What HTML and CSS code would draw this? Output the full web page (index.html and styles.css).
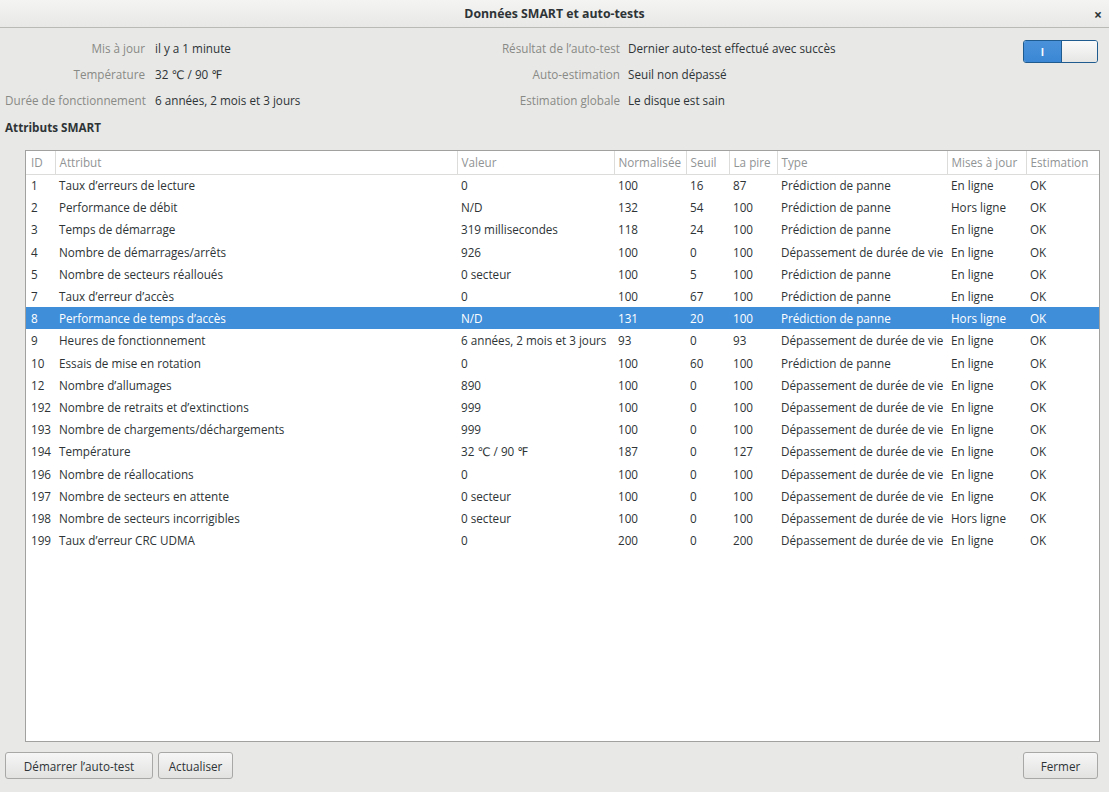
FILE: index.html
```html
<!DOCTYPE html>
<html lang="fr">
<head>
<meta charset="utf-8">
<title>Données SMART et auto-tests</title>
<link rel="stylesheet" href="styles.css">
</head>
<body>
<div class="window">
  <header class="titlebar">
    <span class="title">Données SMART et auto-tests</span>
    <span class="close">×</span>
  </header>

  <section class="info">
    <div class="lbl">Mis à jour</div><div class="val">il y a 1 minute</div>
    <div class="lbl lbl-r">Résultat de l’auto-test</div><div class="val">Dernier auto-test effectué avec succès</div>
    <div class="switch-cell">
      <div class="switch"><span class="on">I</span><span class="knob"></span></div>
    </div>

    <div class="lbl">Température</div><div class="val">32 ℃ / 90 ℉</div>
    <div class="lbl lbl-r">Auto-estimation</div><div class="val">Seuil non dépassé</div>
    <div></div>

    <div class="lbl">Durée de fonctionnement</div><div class="val">6 années, 2 mois et 3 jours</div>
    <div class="lbl lbl-r">Estimation globale</div><div class="val">Le disque est sain</div>
    <div></div>
  </section>

  <h2 class="section-title">Attributs SMART</h2>

  <div class="table-frame">
    <table class="attrs">
      <colgroup>
        <col class="c-id"><col class="c-attr"><col class="c-val"><col class="c-norm"><col class="c-seuil"><col class="c-pire"><col class="c-type"><col class="c-maj"><col class="c-est">
      </colgroup>
      <thead>
        <tr><th>ID</th><th>Attribut</th><th>Valeur</th><th>Normalisée</th><th>Seuil</th><th>La pire</th><th>Type</th><th>Mises à jour</th><th>Estimation</th></tr>
      </thead>
      <tbody>
        <tr><td>1</td><td>Taux d’erreurs de lecture</td><td>0</td><td>100</td><td>16</td><td>87</td><td>Prédiction de panne</td><td>En ligne</td><td>OK</td></tr>
        <tr><td>2</td><td>Performance de débit</td><td>N/D</td><td>132</td><td>54</td><td>100</td><td>Prédiction de panne</td><td>Hors ligne</td><td>OK</td></tr>
        <tr><td>3</td><td>Temps de démarrage</td><td>319 millisecondes</td><td>118</td><td>24</td><td>100</td><td>Prédiction de panne</td><td>En ligne</td><td>OK</td></tr>
        <tr><td>4</td><td>Nombre de démarrages/arrêts</td><td>926</td><td>100</td><td>0</td><td>100</td><td>Dépassement de durée de vie</td><td>En ligne</td><td>OK</td></tr>
        <tr><td>5</td><td>Nombre de secteurs réalloués</td><td>0 secteur</td><td>100</td><td>5</td><td>100</td><td>Prédiction de panne</td><td>En ligne</td><td>OK</td></tr>
        <tr><td>7</td><td>Taux d’erreur d’accès</td><td>0</td><td>100</td><td>67</td><td>100</td><td>Prédiction de panne</td><td>En ligne</td><td>OK</td></tr>
        <tr class="selected"><td>8</td><td>Performance de temps d’accès</td><td>N/D</td><td>131</td><td>20</td><td>100</td><td>Prédiction de panne</td><td>Hors ligne</td><td>OK</td></tr>
        <tr><td>9</td><td>Heures de fonctionnement</td><td>6 années, 2 mois et 3 jours</td><td>93</td><td>0</td><td>93</td><td>Dépassement de durée de vie</td><td>En ligne</td><td>OK</td></tr>
        <tr><td>10</td><td>Essais de mise en rotation</td><td>0</td><td>100</td><td>60</td><td>100</td><td>Prédiction de panne</td><td>En ligne</td><td>OK</td></tr>
        <tr><td>12</td><td>Nombre d’allumages</td><td>890</td><td>100</td><td>0</td><td>100</td><td>Dépassement de durée de vie</td><td>En ligne</td><td>OK</td></tr>
        <tr><td>192</td><td>Nombre de retraits et d’extinctions</td><td>999</td><td>100</td><td>0</td><td>100</td><td>Dépassement de durée de vie</td><td>En ligne</td><td>OK</td></tr>
        <tr><td>193</td><td>Nombre de chargements/déchargements</td><td>999</td><td>100</td><td>0</td><td>100</td><td>Dépassement de durée de vie</td><td>En ligne</td><td>OK</td></tr>
        <tr><td>194</td><td>Température</td><td>32 ℃ / 90 ℉</td><td>187</td><td>0</td><td>127</td><td>Dépassement de durée de vie</td><td>En ligne</td><td>OK</td></tr>
        <tr><td>196</td><td>Nombre de réallocations</td><td>0</td><td>100</td><td>0</td><td>100</td><td>Dépassement de durée de vie</td><td>En ligne</td><td>OK</td></tr>
        <tr><td>197</td><td>Nombre de secteurs en attente</td><td>0 secteur</td><td>100</td><td>0</td><td>100</td><td>Dépassement de durée de vie</td><td>En ligne</td><td>OK</td></tr>
        <tr><td>198</td><td>Nombre de secteurs incorrigibles</td><td>0 secteur</td><td>100</td><td>0</td><td>100</td><td>Dépassement de durée de vie</td><td>Hors ligne</td><td>OK</td></tr>
        <tr><td>199</td><td>Taux d’erreur CRC UDMA</td><td>0</td><td>200</td><td>0</td><td>200</td><td>Dépassement de durée de vie</td><td>En ligne</td><td>OK</td></tr>
      </tbody>
    </table>
  </div>

  <footer class="actions">
    <button class="btn btn-start">Démarrer l’auto-test</button>
    <button class="btn btn-refresh">Actualiser</button>
    <span class="spacer"></span>
    <button class="btn btn-close">Fermer</button>
  </footer>
</div>
</body>
</html>
```

FILE: styles.css
```css
* { box-sizing: border-box; }

html, body {
  margin: 0;
  padding: 0;
  width: 1109px;
  height: 792px;
  overflow: hidden;
  background: #e8e8e7;
  font-family: "Open Sans", "DejaVu Sans", sans-serif;
  font-size: 11.7px;
  color: #2e3436;
}

.window {
  display: flex;
  flex-direction: column;
  height: 792px;
}

.titlebar {
  height: 28px;
  flex: none;
  display: flex;
  align-items: center;
  justify-content: center;
  position: relative;
  background: linear-gradient(#f4f4f3, #e8e8e7);
  border-bottom: 1px solid #b9b9b6;
}

.title {
  font-weight: bold;
  font-size: 12.3px;
  color: #2e3436;
}

.close {
  position: absolute;
  right: 7px;
  top: 5px;
  font-size: 14px;
  font-weight: bold;
  color: #2e3436;
}

.info {
  display: grid;
  grid-template-columns: 150px 300px 173px 1fr auto;
  grid-auto-rows: 26px;
  padding: 7px 11px 0 5px;
  align-items: center;
}

.lbl {
  text-align: right;
  padding-right: 10px;
  color: #888a85;
  white-space: nowrap;
}

.lbl-r { padding-right: 8px; }

.val {
  white-space: nowrap;
  color: #2e3436;
}

.switch-cell {
  align-self: start;
  padding-top: 5px;
}

.switch {
  width: 75px;
  height: 23px;
  display: flex;
  border: 1px solid #1f5b8f;
  border-radius: 3px;
  overflow: hidden;
}

.switch .on {
  width: 38px;
  background: linear-gradient(#4a92da, #3b87d5);
  color: #fff;
  display: flex;
  align-items: center;
  justify-content: center;
  font-size: 10px;
  font-weight: bold;
  border-right: 1px solid #1f5b8f;
}

.switch .knob {
  flex: 1;
  background: linear-gradient(#fafafa, #e6e6e5);
}

.section-title {
  margin: 0;
  padding: 1px 5px 0;
  height: 37px;
  line-height: 26px;
  font-size: 11.7px;
  font-weight: bold;
  color: #2e3436;
}

.table-frame {
  flex: 1;
  margin: 0 9px 0 25px;
  background: #fff;
  border: 1px solid #a1a1a0;
  overflow: hidden;
}

.attrs {
  width: 1073px;
  border-collapse: collapse;
  table-layout: fixed;
}

.c-id { width: 29px; }
.c-attr { width: 402px; }
.c-val { width: 157px; }
.c-norm { width: 72px; }
.c-seuil { width: 43px; }
.c-pire { width: 48px; }
.c-type { width: 170px; }
.c-maj { width: 79px; }
.c-est { width: 73px; }

.attrs th {
  height: 23px;
  text-align: left;
  font-weight: normal;
  color: #919495;
  padding: 0 4px;
  border-left: 1px solid #dcdcdb;
  border-bottom: 1px solid #dcdcdb;
  white-space: nowrap;
  overflow: hidden;
}

.attrs th:first-child { border-left: none; padding-left: 5px; }

.attrs td {
  height: 22.2px;
  padding: 0 4px;
  white-space: nowrap;
  overflow: hidden;
  color: #2e3436;
}

.attrs td:first-child { padding-left: 5px; }

.attrs tr.selected td {
  background: #3f8ed9;
  color: #fff;
}

.actions {
  flex: none;
  display: flex;
  gap: 5px;
  padding: 10px 11px 13px 5px;
}

.spacer { flex: 1; }

.btn {
  height: 27px;
  padding: 0;
  font-family: inherit;
  font-size: 11.7px;
  color: #2e3436;
  background: linear-gradient(#f6f6f6, #e2e2e1);
  border: 1px solid #a8a8a6;
  border-radius: 3px;
}

.btn-start { width: 148px; }
.btn-refresh { width: 75px; }
.btn-close { width: 75px; }
```
